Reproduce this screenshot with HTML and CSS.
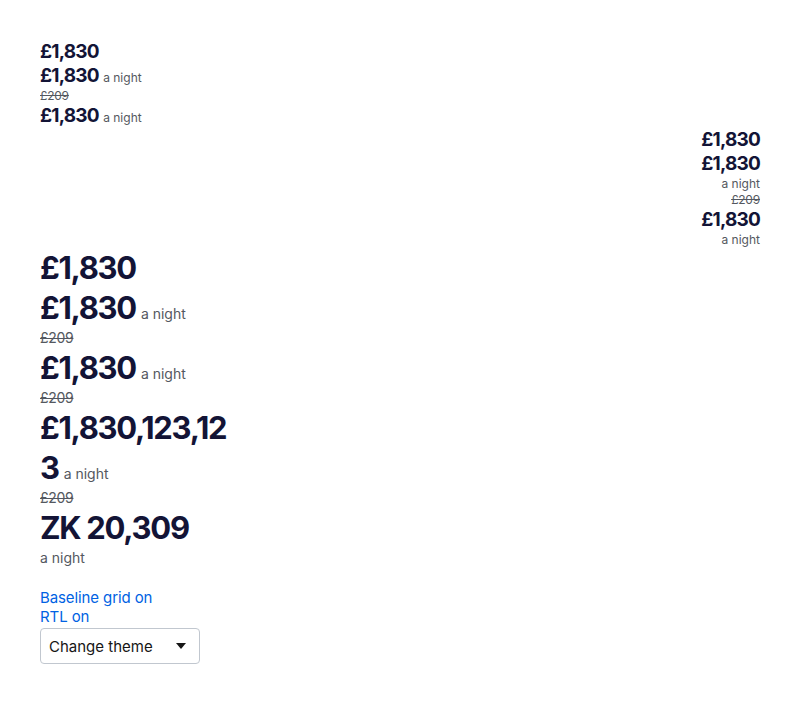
FILE: index.html
```html
<!DOCTYPE html>
<html lang="en">
<head>
<meta charset="utf-8">
<title>Price</title>
<link rel="stylesheet" href="styles.css">
</head>
<body>
<div class="page">
  <section class="price price-small">
    <div class="row"><span class="amount">£1,830</span></div>
    <div class="row"><span class="amount">£1,830</span><span class="trailing"> a night</span></div>
    <div class="old">£209</div>
    <div class="row"><span class="amount">£1,830</span><span class="trailing"> a night</span></div>
  </section>

  <section class="price price-small align-end">
    <div class="row"><span class="amount">£1,830</span></div>
    <div class="row"><span class="amount">£1,830</span></div>
    <div class="trailing-line">a night</div>
    <div class="old">£209</div>
    <div class="row"><span class="amount">£1,830</span></div>
    <div class="trailing-line">a night</div>
  </section>

  <section class="price price-large">
    <div class="row"><span class="amount">£1,830</span></div>
    <div class="row"><span class="amount">£1,830</span><span class="trailing"> a night</span></div>
    <div class="old">£209</div>
    <div class="row"><span class="amount">£1,830</span><span class="trailing"> a night</span></div>
    <div class="old">£209</div>
    <div class="row narrow"><span class="amount">£1,830,123,123</span><span class="trailing"> a night</span></div>
    <div class="old">£209</div>
    <div class="row"><span class="amount">ZK 20,309</span></div>
    <div class="trailing-line">a night</div>
  </section>

  <section class="controls">
    <a class="toggle" href="#">Baseline grid on</a>
    <a class="toggle" href="#">RTL on</a>
    <div class="select">
      <span>Change theme</span>
      <svg class="caret" width="10" height="6" viewBox="0 0 10 6" aria-hidden="true"><path d="M0 0h10L5 6z" fill="#161616"/></svg>
    </div>
  </section>
</div>
</body>
</html>
```

FILE: styles.css
```css
* { box-sizing: border-box; }
html, body { margin: 0; padding: 0; background: #fff; }
body {
  font-family: Inter, "Noto Sans", "Liberation Sans", sans-serif;
  color: #131436;
}
.page {
  padding: 40px;
  display: flex;
  flex-direction: column;
}
.price { display: flex; flex-direction: column; }
.row { white-space: nowrap; }
.amount { font-weight: 700; }
.trailing, .trailing-line { color: #545860; font-weight: 400; }
.trailing { margin-left: 1px; }
.old { color: #545860; text-decoration: line-through; }

.price-small .row { font-size: 19px; line-height: 24px; }
.price-small .amount { letter-spacing: -0.8px; }
.price-small .trailing,
.price-small .trailing-line { font-size: 12px; line-height: 16px; letter-spacing: 0; }
.price-small .old { font-size: 12px; line-height: 16px; letter-spacing: -0.2px; }

.align-end { text-align: right; }

.price-large .row { font-size: 31px; line-height: 40px; }
.price-large .amount { letter-spacing: -1.3px; }
.price-large .trailing,
.price-large .trailing-line { font-size: 14px; line-height: 20px; letter-spacing: 0; }
.price-large .old { font-size: 14px; line-height: 20px; letter-spacing: -0.3px; }
.price-large .row.narrow { white-space: normal; word-break: break-all; width: 190px; }

.controls {
  margin-top: 20px;
  display: flex;
  flex-direction: column;
  align-items: flex-start;
}
.toggle {
  color: #0062e3;
  text-decoration: none;
  font-size: 15px;
  line-height: 19px;
  letter-spacing: -0.1px;
}
.select {
  margin-top: 2px;
  width: 160px;
  height: 36px;
  border: 1px solid #c1c7cf;
  border-radius: 4px;
  display: flex;
  align-items: center;
  justify-content: space-between;
  padding: 0 13px 0 8px;
  font-size: 15px;
  color: #161616;
}
.caret { display: block; }
```
